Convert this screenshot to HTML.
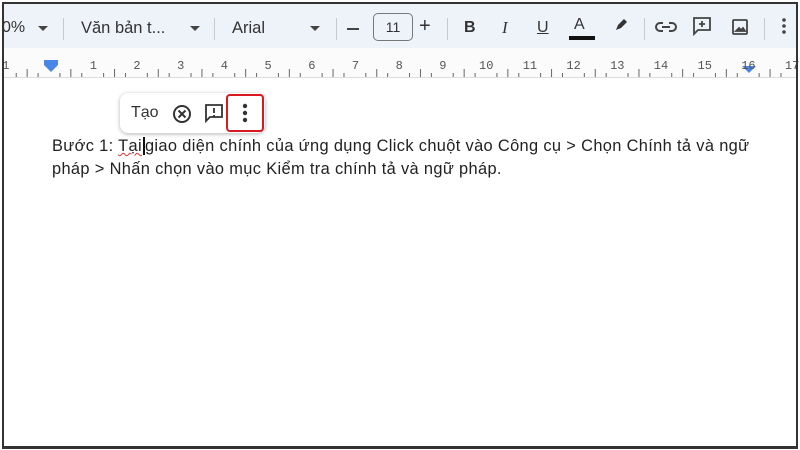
<!DOCTYPE html>
<html><head><meta charset="utf-8"><style>
*{margin:0;padding:0;box-sizing:border-box}
body{width:800px;height:450px;overflow:hidden;background:#fff;font-family:"Liberation Sans",Arial,sans-serif;position:relative}
.frame{position:absolute;left:2px;top:2px;width:796px;height:447px;border:2px solid #333;border-bottom-width:3px;}
.tb{position:absolute;left:4px;top:4px;width:792px;height:44px;background:#eef2f9;}
.t{position:absolute;top:15px;font-size:16px;color:#333}
.sep{position:absolute;top:14px;width:1px;height:22px;background:#c7cbd1}
.ruler{position:absolute;left:4px;top:48px;width:792px;height:30px;background:#fbfbfc;border-bottom:1px solid #ddd}
.num{position:absolute;top:59px;font-size:12px;color:#555;font-family:"Liberation Mono",monospace}
.doc{position:absolute;left:52px;top:135px;font-size:16.4px;letter-spacing:0.35px;line-height:23px;color:#222;width:705px}
.pop{position:absolute;left:120px;top:93px;width:145px;height:40px;background:#fff;border-radius:8px;box-shadow:0 1px 4px rgba(0,0,0,.3)}
.red{position:absolute;left:226px;top:94px;width:38px;height:38px;border:2px solid #d9191f;border-radius:4px}
</style></head><body>
<div class="tb">
<span class="t" style="left:-2px">0%</span>
<svg style="position:absolute;left:34px;top:22px" width="10" height="6"><path d="M0 0h10L5 5z" fill="#444"/></svg>
<div class="sep" style="left:59px"></div>
<span class="t" style="left:77px;font-size:16.5px">Văn bản t...</span>
<svg style="position:absolute;left:186px;top:22px" width="10" height="6"><path d="M0 0h10L5 5z" fill="#444"/></svg>
<div class="sep" style="left:210px"></div>
<span class="t" style="left:228px;font-size:16.5px">Arial</span>
<svg style="position:absolute;left:306px;top:22px" width="10" height="6"><path d="M0 0h10L5 5z" fill="#444"/></svg>
<div class="sep" style="left:332px"></div>
<div style="position:absolute;left:343px;top:24px;width:12px;height:2px;background:#444"></div>
<div style="position:absolute;left:369px;top:9px;width:40px;height:28px;border:1px solid #777;border-radius:5px;font-size:14px;text-align:center;line-height:26px;color:#333">11</div>
<span class="t" style="left:415px;font-size:20px;top:11px">+</span>
<div class="sep" style="left:443px"></div>
<span class="t" style="left:460px;font-weight:bold">B</span>
<span class="t" style="left:498px;font-style:italic;font-family:'Liberation Serif',serif;font-size:17px;top:14px">I</span>
<span class="t" style="left:533px;text-decoration:underline">U</span>
<span class="t" style="left:570px;top:12px">A</span>
<div style="position:absolute;left:565px;top:32px;width:26px;height:4px;background:#111"></div>
<svg style="position:absolute;left:609px;top:14px" width="16" height="16"><path d="M3 12l2-5 6-6 3 3-6 6z" fill="#333"/></svg>
<div class="sep" style="left:640px"></div>
<svg style="position:absolute;left:651px;top:17px" width="22" height="12" fill="none" stroke="#444" stroke-width="2"><path d="M8 2H5a4 4 0 0 0 0 8h3M14 2h3a4 4 0 0 1 0 8h-3M7 6h8"/></svg>
<svg style="position:absolute;left:688px;top:12px" width="20" height="20" fill="none" stroke="#444" stroke-width="1.8"><path d="M2 2h16v12H6l-4 4z M10 5v6M7 8h6"/></svg>
<svg style="position:absolute;left:727px;top:14px" width="18" height="18" fill="none" stroke="#444" stroke-width="1.8"><rect x="2" y="2" width="14" height="14" rx="1"/><path d="M5 13l3-3 2 2 2-2 2 3z" fill="#444"/></svg>
<div class="sep" style="left:760px"></div>
<svg style="position:absolute;left:778px;top:13px" width="4" height="18"><circle cx="2" cy="3" r="1.8" fill="#444"/><circle cx="2" cy="9" r="1.8" fill="#444"/><circle cx="2" cy="15" r="1.8" fill="#444"/></svg>
</div>
<div class="ruler">
<svg width="792" height="30" style="position:absolute;left:0;top:0" id="r"></svg>
</div>
<div style="position:absolute;left:44px;top:60px;width:14px;height:5px;background:#4a86e8"></div>
<svg style="position:absolute;left:44px;top:65px" width="14" height="8"><path d="M0 0h14L7 7z" fill="#4a86e8"/></svg>
<svg style="position:absolute;left:742px;top:66px" width="14" height="8"><path d="M0 0h14L7 7z" fill="#4a86e8"/></svg>
<div id="nums"></div>
<div class="pop">
<span style="position:absolute;left:11px;top:11px;font-size:16px;color:#333">Tạo</span>
<svg style="position:absolute;left:52px;top:11px" width="20" height="20" fill="none" stroke="#333" stroke-width="2"><circle cx="10" cy="10" r="8"/><path d="M6.5 6.5l7 7M13.5 6.5l-7 7"/></svg>
<svg style="position:absolute;left:84px;top:10px" width="20" height="20" fill="none" stroke="#333" stroke-width="1.8"><path d="M2 2h16v12H6l-4 4z"/><path d="M10 5v5M10 12v1.5"/></svg>
</div>
<div class="red"></div>
<svg style="position:absolute;left:242px;top:103px" width="6" height="20"><circle cx="3" cy="3" r="2.2" fill="#333"/><circle cx="3" cy="10" r="2.2" fill="#333"/><circle cx="3" cy="17" r="2.2" fill="#333"/></svg>
<div class="doc">Bước 1: <span style="text-decoration:underline wavy #d33;text-decoration-thickness:1px">Tại</span><span style="border-left:2px solid #111;margin-left:1px"></span>giao diện chính của ứng dụng Click chuột vào Công cụ &gt; Chọn Chính tả và ngữ<br>pháp &gt; Nhấn chọn vào mục Kiểm tra chính tả và ngữ pháp.</div>
<div class="frame"></div>
<script>
var r=document.getElementById('r'),s='';
for(var i=-1;i<=17;i++){var x=49+43.7*i-4;
for(var k=1;k<4;k++){var xx=x+k*43.7/4;s+='<line x1="'+xx+'" x2="'+xx+'" y1="'+(k==2?21:25)+'" y2="29" stroke="#666" stroke-width="1"/>';}
}
r.innerHTML=s;
var n='';for(var i=-1;i<=17;i++){if(i==0)continue;n+='<span class="num" style="left:'+(49+43.7*i-(Math.abs(i)>9?7:3))+'px">'+Math.abs(i)+'</span>';}
document.getElementById('nums').innerHTML=n;
</script>
</body></html>
